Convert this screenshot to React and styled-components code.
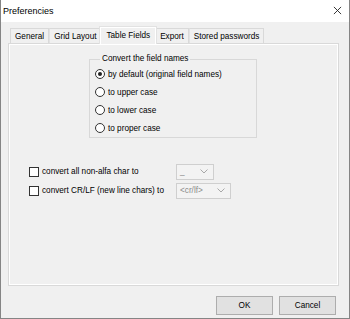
import { createGlobalStyle, styled } from "styled-components";

const GlobalStyle = createGlobalStyle`
  html, body {
    margin: 0;
    padding: 0;
    background: #f0f0f0;
  }

  * {
    box-sizing: border-box;
  }
`;

const tabs = ["General", "Grid Layout", "Table Fields", "Export", "Stored passwords"];
const cases = [
  "by default (original field names)",
  "to upper case",
  "to lower case",
  "to proper case",
];

const App = () => {
  return (
    <>
      <GlobalStyle />
      <Window>
        <TitleBar>
          <Title>Preferencies</Title>
          <Close viewBox="0 0 10 10">
            <path d="M1 1L9 9M9 1L1 9" stroke="#222" strokeWidth="1" fill="none" />
          </Close>
        </TitleBar>

        <Body>
          <TabStrip>
            {tabs.map((t) => (
              <Tab key={t} $active={t === "Table Fields"}>
                {t}
              </Tab>
            ))}
          </TabStrip>

          <Panel>
            <GroupBox>
              <Legend>Convert the field names</Legend>
              {cases.map((c, i) => (
                <RadioRow key={c}>
                  <Radio $checked={i === 0} />
                  {c}
                </RadioRow>
              ))}
            </GroupBox>

            <Options>
              <OptionRow>
                <CheckLabel>
                  <Check />
                  convert all non-alfa char to
                </CheckLabel>
                <Combo $width={38}>
                  <span>_</span>
                  <Chevron />
                </Combo>
              </OptionRow>
              <OptionRow>
                <CheckLabel>
                  <Check />
                  convert CR/LF (new line chars) to
                </CheckLabel>
                <Combo $width={55}>
                  <span>&lt;cr/lf&gt;</span>
                  <Chevron />
                </Combo>
              </OptionRow>
            </Options>
          </Panel>

          <Buttons>
            <Button>OK</Button>
            <Button>Cancel</Button>
          </Buttons>
        </Body>
      </Window>
    </>
  );
};

const Chevron = () => (
  <ChevronIcon viewBox="0 0 8 5">
    <path d="M0.5 0.5L4 4L7.5 0.5" stroke="#a8a8a8" strokeWidth="1" fill="none" />
  </ChevronIcon>
);

export default App;

const Window = styled.div`
  width: 350px;
  height: 319px;
  display: flex;
  flex-direction: column;
  border: 1px solid #858585;
  border-top: none;
  background: #f0f0f0;
  font-family: "Liberation Sans", Arial, sans-serif;
  font-size: 8.2px;
  color: #000;
`;

const TitleBar = styled.div`
  height: 22px;
  background: #fff;
  display: flex;
  align-items: center;
  justify-content: space-between;
  padding: 0 7px 1px 2px;
`;

const Title = styled.div`
  font-size: 9px;
`;

const Close = styled.svg`
  width: 9px;
  height: 9px;
`;

const Body = styled.div`
  flex: 1;
  display: flex;
  flex-direction: column;
  padding: 4px 10px 3px 7px;
`;

const TabStrip = styled.div`
  height: 17px;
  display: flex;
  align-items: flex-end;
  padding-left: 2px;
  position: relative;
  z-index: 1;
`;

const Tab = styled.div`
  height: ${(p) => (p.$active ? "18px" : "15px")};
  margin: ${(p) => (p.$active ? "0 -2px -1px" : "0")};
  padding: ${(p) => (p.$active ? "1px 6px 2px" : "0 4px")};
  display: flex;
  align-items: center;
  white-space: nowrap;
  background: #f0f0f0;
  border: 1px solid ${(p) => (p.$active ? "#e2e2e2" : "#d9d9d9")};
  border-bottom: none;
  box-shadow: ${(p) => (p.$active ? "inset 1px 1px 0 #fff, inset -1px 0 0 #fff" : "none")};
  position: relative;
  z-index: ${(p) => (p.$active ? 2 : 0)};

  & + & {
    border-left: ${(p) => (p.$active ? "1px solid #e2e2e2" : "none")};
  }
`;

const Panel = styled.div`
  flex: 1;
  border: 1px solid #d9d9d9;
  box-shadow: inset 0 0 0 1px #fff;
  display: flex;
  flex-direction: column;
`;

const GroupBox = styled.fieldset`
  margin: 10px 0 0 80px;
  width: 168px;
  padding: 1px 5px 0;
  border: 1px solid #d8d8d8;
  min-width: 0;
`;

const Legend = styled.legend`
  padding: 0 2px;
  margin-left: 5px;
  line-height: 10px;
`;

const RadioRow = styled.div`
  height: 18px;
  display: flex;
  align-items: center;
  gap: 3px;
  white-space: nowrap;
`;

const Radio = styled.span`
  width: 10px;
  height: 10px;
  border-radius: 50%;
  border: 1px solid #333;
  background: #fff;
  display: flex;
  align-items: center;
  justify-content: center;

  &::after {
    content: "";
    width: 4px;
    height: 4px;
    border-radius: 50%;
    background: #222;
    display: ${(p) => (p.$checked ? "block" : "none")};
  }
`;

const Options = styled.div`
  margin-top: 24px;
  padding-left: 20px;
`;

const OptionRow = styled.div`
  height: 19px;
  display: grid;
  grid-template-columns: 147px auto;
  align-items: center;
`;

const CheckLabel = styled.div`
  display: flex;
  align-items: center;
  gap: 3px;
  white-space: nowrap;
`;

const Check = styled.span`
  width: 10px;
  height: 10px;
  border: 1px solid #333;
  background: #fff;
`;

const Combo = styled.div`
  width: ${(p) => p.$width}px;
  height: 16px;
  border: 1px solid #cfcfcf;
  background: #f3f3f3;
  display: flex;
  align-items: center;
  justify-content: space-between;
  padding: 0 5px 0 3px;
  color: #8a8a8a;
`;

const ChevronIcon = styled.svg`
  width: 8px;
  height: 5px;
`;

const Buttons = styled.div`
  display: flex;
  justify-content: flex-end;
  gap: 6px;
  margin-top: 10px;
  padding-right: 3px;
`;

const Button = styled.div`
  width: 57px;
  height: 19px;
  border: 1px solid #adadad;
  background: #e1e1e1;
  display: flex;
  align-items: center;
  justify-content: center;
`;
